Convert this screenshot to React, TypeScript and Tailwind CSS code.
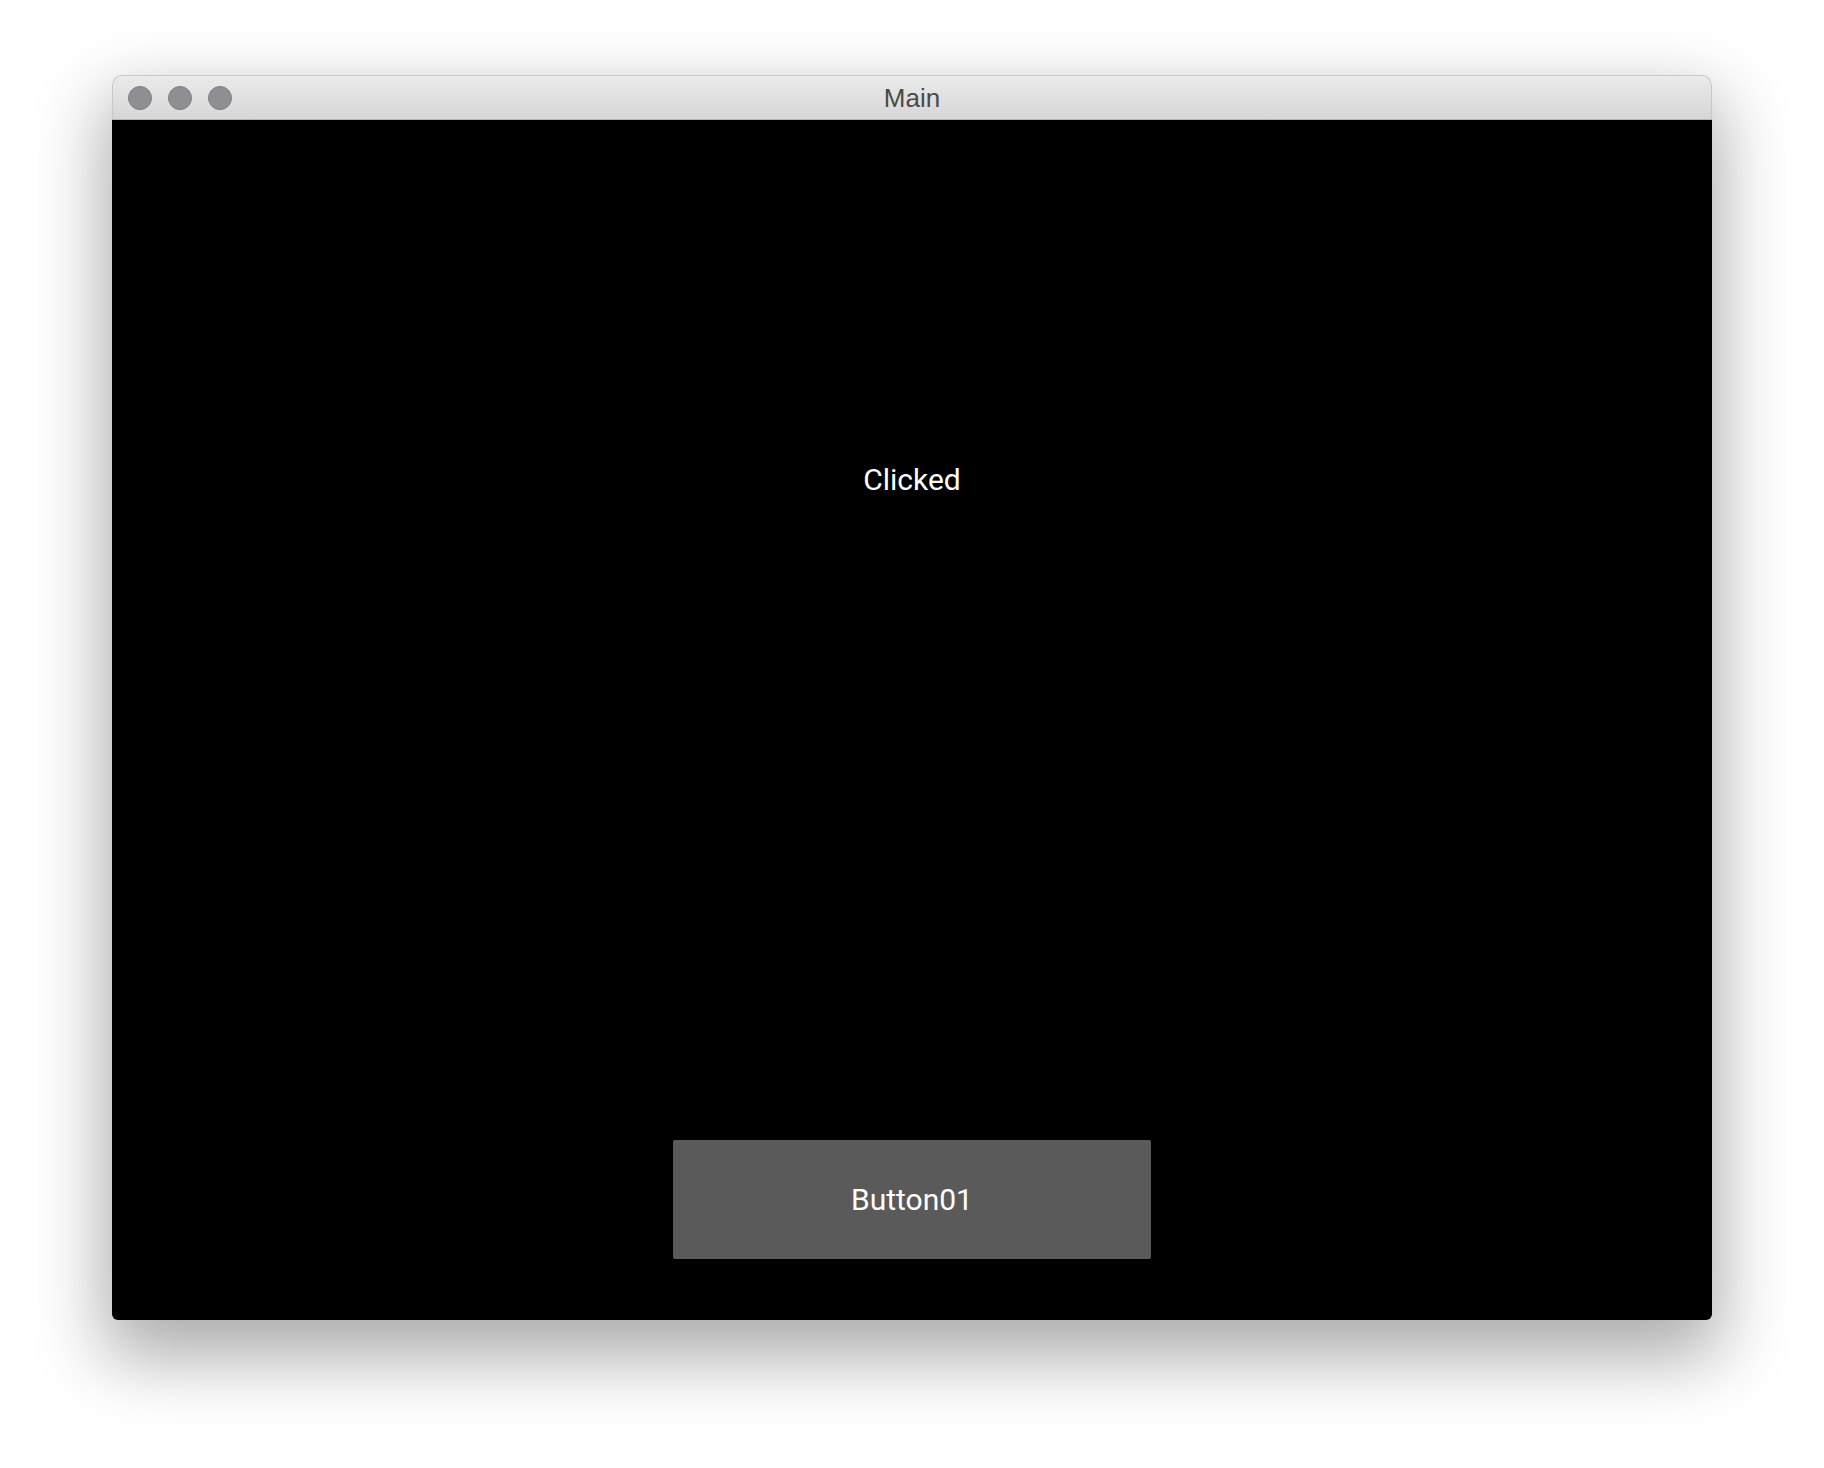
import { useState } from "react";

export default function App() {
  const [clicked, setClicked] = useState(true);

  return (
    <div className="min-h-[1468px] w-[1824px] bg-white pt-[75px] pl-[112px]">
      <div className="flex w-[1600px] flex-col rounded-[10px] shadow-[0_30px_70px_8px_rgba(0,0,0,0.33)]">
        {/* Title bar */}
        <div className="relative flex h-[44px] items-center rounded-t-[10px] border border-b-0 border-[#c8c8c8] bg-gradient-to-b from-[#ebebeb] to-[#d6d6d6]">
          <div className="flex items-center gap-[16px] pl-[15px]">
            <span className="h-[24px] w-[24px] rounded-full border border-[#7d7d82] bg-[#8e8e93]" />
            <span className="h-[24px] w-[24px] rounded-full border border-[#7d7d82] bg-[#8e8e93]" />
            <span className="h-[24px] w-[24px] rounded-full border border-[#7d7d82] bg-[#8e8e93]" />
          </div>
          <div className="absolute inset-0 flex items-center justify-center pt-[2px] font-['Liberation_Sans',Arial,sans-serif] text-[26px] text-[#4a4a4a]">
            Main
          </div>
        </div>
        <div className="h-px bg-[#b4b4b4]" />

        {/* Content */}
        <div className="flex h-[1200px] flex-col items-center rounded-b-[6px] bg-black font-['Roboto',sans-serif] text-white">
          <div className="mt-[345px] text-[30px] leading-[30px]">
            {clicked ? "Clicked" : ""}
          </div>
          <div className="flex-1" />
          <button
            onClick={() => setClicked(!clicked)}
            className="mb-[61px] flex h-[119px] w-[478px] items-center justify-center rounded-[2px] bg-[#5a5a5a] text-[30px] text-white"
          >
            Button01
          </button>
        </div>
      </div>
    </div>
  );
}
